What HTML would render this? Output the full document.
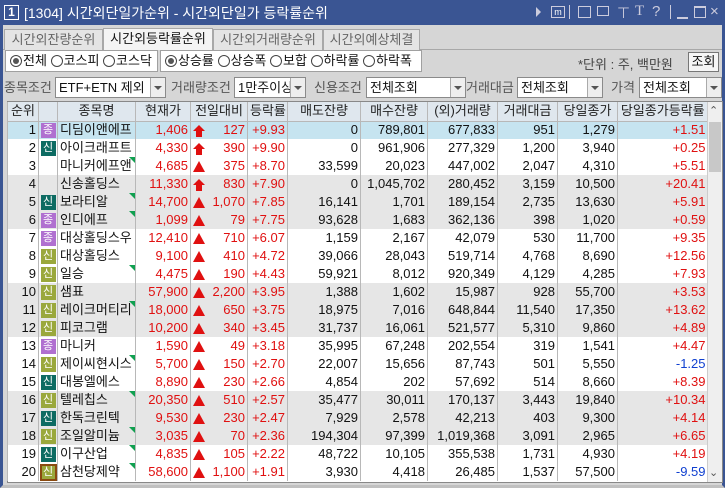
<!DOCTYPE html>
<html><head><meta charset="utf-8"><style>
*{margin:0;padding:0;box-sizing:border-box}
body{width:725px;height:488px;overflow:hidden;background:#d6d6d6;font-family:"Liberation Sans","Noto Sans CJK KR",sans-serif;font-size:13px;color:#111;position:relative}
.a{position:absolute}
.title{left:0;top:0;width:725px;height:25px;background:#3a5593;color:#fff;font-size:14px}
.tab{top:29px;height:21px;border:1px solid #a8a8a8;border-bottom:none;background:#e4e4e4;color:#666;font-size:13px;line-height:20px;text-align:center}
.grp{top:50px;height:22px;background:#fff;border:1px solid #a0a0a0;line-height:20px;font-size:13px;padding-left:4px;white-space:nowrap}
.rd{display:inline-block;width:12px;height:12px;border:1px solid #444;border-radius:50%;vertical-align:-2px;margin-right:1px;position:relative}
.rd.on::after{content:"";position:absolute;left:2px;top:2px;width:6px;height:6px;border-radius:50%;background:#555}
.lbl{top:79px;font-size:13px;color:#555;line-height:17px}
.cb{top:77px;height:21px;background:#fff;border:1px solid #8a8a8a;line-height:19px;padding-left:3px;font-size:13px}
.cb b{position:absolute;right:0;top:0;width:15px;height:19px;border-left:1px solid #aaa;background:#eee}
.cb b::after{content:"";position:absolute;left:3px;top:8px;border-left:4px solid transparent;border-right:4px solid transparent;border-top:4px solid #555}
table{position:absolute;left:7px;top:102px;border-collapse:collapse;table-layout:fixed;width:700px;background:#fff}
tr{height:18px}
td,th{height:18px;line-height:16px;padding:0 2px;white-space:nowrap;overflow:hidden;text-align:right;border-left:1px solid #b8b8b8;font-weight:normal;font-size:13px}
th{height:19px;background:#dfe7ee;text-align:center;border-bottom:1px solid #b8b8b8;color:#222}
tr.g td{background:#e6e6e6}
tr.s td{background:#c6e4f0}
td.n{text-align:left;position:relative}
td.n.m::after{content:"";position:absolute;right:0;top:0;border-left:6px solid transparent;border-top:6px solid #10a050}
.r{color:#e01010}.bl{color:#1040d0}
.bd{display:inline-block;width:15px;height:15px;line-height:15px;text-align:center;font-size:11px;vertical-align:top;margin-top:1px}
.p{background:#b070d0;color:#fff}.t{background:#0d6b62;color:#fff}.o{background:#9aa83c;color:#fff}
td.c{text-align:center;padding:0}
.tri{display:inline-block;border-left:6px solid transparent;border-right:6px solid transparent;border-bottom:11px solid #e01010}
.up{display:inline-block;width:12px;height:12px;position:relative}
.up::before{content:"";position:absolute;left:0;top:0;border-left:6px solid transparent;border-right:6px solid transparent;border-bottom:6px solid #e01010}
.up::after{content:"";position:absolute;left:3px;top:6px;width:6px;height:6px;background:#e01010}
</style></head><body>
<div class="a title">
<div class="a" style="left:4px;top:5px;width:15px;height:15px;border:1.5px solid #fff;font-size:12px;line-height:12px;text-align:center;font-weight:bold">1</div>
<div class="a" style="left:24px;top:3px">[1304] 시간외단일가순위 - 시간외단일가 등락률순위</div>
<div class="a" style="left:536px;top:7px;border-top:5px solid transparent;border-bottom:5px solid transparent;border-left:5px solid #ccd"></div>
<div class="a" style="left:551px;top:6px;width:14px;height:12px;border:1px solid #ccd;font-size:9px;line-height:10px;text-align:center">m</div>
<div class="a" style="left:569px;top:5px;width:1px;height:14px;background:#ccd"></div>
<div class="a" style="left:578px;top:6px;width:13px;height:12px;border:1px solid #ccd"></div>
<div class="a" style="left:597px;top:6px;width:12px;height:10px;border:1px solid #ccd"></div>
<div class="a" style="left:617px;top:4px;font-size:15px;color:#ccd">⊤</div>
<div class="a" style="left:635px;top:3px;font-size:15px;color:#ccd;font-family:'Liberation Serif'">T</div>
<div class="a" style="left:652px;top:3px;font-size:15px;color:#ccd">?</div>
<div class="a" style="left:670px;top:5px;width:1px;height:14px;background:#ccd"></div>
<div class="a" style="left:677px;top:17px;width:11px;height:2px;background:#ccd"></div>
<div class="a" style="left:694px;top:6px;width:12px;height:12px;border:1px solid #ccd;border-top-width:2px"></div>
<div class="a" style="left:710px;top:3px;font-size:15px;color:#ccd">×</div>
</div>
<div class="a" style="left:0;top:25px;width:725px;height:463px;border:3px solid #3a5593;border-top:none;border-bottom-color:#c0c0c0"></div>
<div class="a" style="left:3px;top:49px;width:719px;height:1px;background:#a8a8a8"></div>
<div class="a tab" style="left:4px;width:99px">시간외잔량순위</div>
<div class="a tab" style="left:103px;top:28px;height:22px;width:110px;background:#f4f4f4;color:#111">시간외등락률순위</div>
<div class="a tab" style="left:213px;width:110px">시간외거래량순위</div>
<div class="a tab" style="left:323px;width:97px">시간외예상체결</div>
<div class="a grp" style="left:5px;width:153px"><span class="rd on"></span>전체 <span class="rd"></span>코스피 <span class="rd"></span>코스닥</div>
<div class="a grp" style="left:160px;width:262px"><span class="rd on"></span>상승률 <span class="rd"></span>상승폭 <span class="rd"></span>보합 <span class="rd"></span>하락률 <span class="rd"></span>하락폭</div>
<div class="a" style="left:578px;top:54px;font-size:13px;color:#444">*단위 : 주, 백만원</div>
<div class="a" style="left:688px;top:52px;width:31px;height:20px;background:#f6f6f6;border:1px solid #777;font-size:13px;line-height:18px;text-align:center">조회</div>
<div class="a lbl" style="left:4px">종목조건</div>
<div class="a cb" style="left:55px;width:111px">ETF+ETN 제외<b></b></div>
<div class="a lbl" style="left:171px">거래량조건</div>
<div class="a cb" style="left:234px;width:72px">1만주이상<b></b></div>
<div class="a lbl" style="left:314px">신용조건</div>
<div class="a cb" style="left:366px;width:100px">전체조회<b></b></div>
<div class="a lbl" style="left:466px">거래대금</div>
<div class="a cb" style="left:517px;width:86px">전체조회<b></b></div>
<div class="a lbl" style="left:611px">가격</div>
<div class="a cb" style="left:639px;width:83px">전체조회<b></b></div>
<div class="a" style="left:7px;top:101px;width:716px;height:382px;border:1px solid #888;background:#fff"></div>
<table>
<colgroup><col style="width:31px"><col style="width:19px"><col style="width:78px"><col style="width:55px"><col style="width:57px"><col style="width:40px"><col style="width:73px"><col style="width:67px"><col style="width:70px"><col style="width:60px"><col style="width:60px"><col style="width:90px"></colgroup>
<tr style="height:19px"><th>순위</th><th></th><th>종목명</th><th>현재가</th><th>전일대비</th><th>등락률</th><th>매도잔량</th><th>매수잔량</th><th>(외)거래량</th><th>거래대금</th><th>당일종가</th><th>당일종가등락률</th></tr>
<tr class="s"><td>1</td><td class="c"><span class="bd p">종</span></td><td class="n">디딤이앤에프</td><td class="r">1,406</td><td class="r"><span class="up" style="float:left;margin-top:3px"></span>127</td><td class="r">+9.93</td><td>0</td><td>789,801</td><td>677,833</td><td>951</td><td>1,279</td><td class="r">+1.51</td></tr>
<tr><td>2</td><td class="c"><span class="bd t">신</span></td><td class="n">아이크래프트</td><td class="r">4,330</td><td class="r"><span class="up" style="float:left;margin-top:3px"></span>390</td><td class="r">+9.90</td><td>0</td><td>961,906</td><td>277,329</td><td>1,200</td><td>3,940</td><td class="r">+0.25</td></tr>
<tr><td>3</td><td class="c"></td><td class="n m">마니커에프앤</td><td class="r">4,685</td><td class="r"><span class="tri" style="float:left;margin-top:3px"></span>375</td><td class="r">+8.70</td><td>33,599</td><td>20,023</td><td>447,002</td><td>2,047</td><td>4,310</td><td class="r">+5.51</td></tr>
<tr class="g"><td>4</td><td class="c"></td><td class="n">신송홀딩스</td><td class="r">11,330</td><td class="r"><span class="up" style="float:left;margin-top:3px"></span>830</td><td class="r">+7.90</td><td>0</td><td>1,045,702</td><td>280,452</td><td>3,159</td><td>10,500</td><td class="r">+20.41</td></tr>
<tr class="g"><td>5</td><td class="c"><span class="bd t">신</span></td><td class="n m">보라티알</td><td class="r">14,700</td><td class="r"><span class="tri" style="float:left;margin-top:3px"></span>1,070</td><td class="r">+7.85</td><td>16,141</td><td>1,701</td><td>189,154</td><td>2,735</td><td>13,630</td><td class="r">+5.91</td></tr>
<tr class="g"><td>6</td><td class="c"><span class="bd p">종</span></td><td class="n m">인디에프</td><td class="r">1,099</td><td class="r"><span class="tri" style="float:left;margin-top:3px"></span>79</td><td class="r">+7.75</td><td>93,628</td><td>1,683</td><td>362,136</td><td>398</td><td>1,020</td><td class="r">+0.59</td></tr>
<tr><td>7</td><td class="c"><span class="bd p">종</span></td><td class="n">대상홀딩스우</td><td class="r">12,410</td><td class="r"><span class="tri" style="float:left;margin-top:3px"></span>710</td><td class="r">+6.07</td><td>1,159</td><td>2,167</td><td>42,079</td><td>530</td><td>11,700</td><td class="r">+9.35</td></tr>
<tr><td>8</td><td class="c"><span class="bd o">신</span></td><td class="n">대상홀딩스</td><td class="r">9,100</td><td class="r"><span class="tri" style="float:left;margin-top:3px"></span>410</td><td class="r">+4.72</td><td>39,066</td><td>28,043</td><td>519,714</td><td>4,768</td><td>8,690</td><td class="r">+12.56</td></tr>
<tr><td>9</td><td class="c"><span class="bd o">신</span></td><td class="n m">일승</td><td class="r">4,475</td><td class="r"><span class="tri" style="float:left;margin-top:3px"></span>190</td><td class="r">+4.43</td><td>59,921</td><td>8,012</td><td>920,349</td><td>4,129</td><td>4,285</td><td class="r">+7.93</td></tr>
<tr class="g"><td>10</td><td class="c"><span class="bd o">신</span></td><td class="n">샘표</td><td class="r">57,900</td><td class="r"><span class="tri" style="float:left;margin-top:3px"></span>2,200</td><td class="r">+3.95</td><td>1,388</td><td>1,602</td><td>15,987</td><td>928</td><td>55,700</td><td class="r">+3.53</td></tr>
<tr class="g"><td>11</td><td class="c"><span class="bd o">신</span></td><td class="n m">레이크머티리</td><td class="r">18,000</td><td class="r"><span class="tri" style="float:left;margin-top:3px"></span>650</td><td class="r">+3.75</td><td>18,975</td><td>7,016</td><td>648,844</td><td>11,540</td><td>17,350</td><td class="r">+13.62</td></tr>
<tr class="g"><td>12</td><td class="c"><span class="bd o">신</span></td><td class="n">피코그램</td><td class="r">10,200</td><td class="r"><span class="tri" style="float:left;margin-top:3px"></span>340</td><td class="r">+3.45</td><td>31,737</td><td>16,061</td><td>521,577</td><td>5,310</td><td>9,860</td><td class="r">+4.89</td></tr>
<tr><td>13</td><td class="c"><span class="bd p">종</span></td><td class="n">마니커</td><td class="r">1,590</td><td class="r"><span class="tri" style="float:left;margin-top:3px"></span>49</td><td class="r">+3.18</td><td>35,995</td><td>67,248</td><td>202,554</td><td>319</td><td>1,541</td><td class="r">+4.47</td></tr>
<tr><td>14</td><td class="c"><span class="bd o">신</span></td><td class="n m">제이씨현시스</td><td class="r">5,700</td><td class="r"><span class="tri" style="float:left;margin-top:3px"></span>150</td><td class="r">+2.70</td><td>22,007</td><td>15,656</td><td>87,743</td><td>501</td><td>5,550</td><td class="bl">-1.25</td></tr>
<tr><td>15</td><td class="c"><span class="bd t">신</span></td><td class="n">대봉엘에스</td><td class="r">8,890</td><td class="r"><span class="tri" style="float:left;margin-top:3px"></span>230</td><td class="r">+2.66</td><td>4,854</td><td>202</td><td>57,692</td><td>514</td><td>8,660</td><td class="r">+8.39</td></tr>
<tr class="g"><td>16</td><td class="c"><span class="bd o">신</span></td><td class="n m">텔레칩스</td><td class="r">20,350</td><td class="r"><span class="tri" style="float:left;margin-top:3px"></span>510</td><td class="r">+2.57</td><td>35,477</td><td>30,011</td><td>170,137</td><td>3,443</td><td>19,840</td><td class="r">+10.34</td></tr>
<tr class="g"><td>17</td><td class="c"><span class="bd t">신</span></td><td class="n">한독크린텍</td><td class="r">9,530</td><td class="r"><span class="tri" style="float:left;margin-top:3px"></span>230</td><td class="r">+2.47</td><td>7,929</td><td>2,578</td><td>42,213</td><td>403</td><td>9,300</td><td class="r">+4.14</td></tr>
<tr class="g"><td>18</td><td class="c"><span class="bd o">신</span></td><td class="n m">조일알미늄</td><td class="r">3,035</td><td class="r"><span class="tri" style="float:left;margin-top:3px"></span>70</td><td class="r">+2.36</td><td>194,304</td><td>97,399</td><td>1,019,368</td><td>3,091</td><td>2,965</td><td class="r">+6.65</td></tr>
<tr><td>19</td><td class="c"><span class="bd t">신</span></td><td class="n m">이구산업</td><td class="r">4,835</td><td class="r"><span class="tri" style="float:left;margin-top:3px"></span>105</td><td class="r">+2.22</td><td>48,722</td><td>10,105</td><td>355,538</td><td>1,731</td><td>4,930</td><td class="r">+4.19</td></tr>
<tr><td>20</td><td class="c"><span class="bd o" style="outline:2px solid #8a4a10;outline-offset:-1px">신</span></td><td class="n m">삼천당제약</td><td class="r">58,600</td><td class="r"><span class="tri" style="float:left;margin-top:3px"></span>1,100</td><td class="r">+1.91</td><td>3,930</td><td>4,418</td><td>26,485</td><td>1,537</td><td>57,500</td><td class="bl">-9.59</td></tr>
</table>
<div class="a" style="left:707px;top:102px;width:15px;height:380px;background:#efefef;border-left:1px solid #ccc"></div>
<div class="a" style="left:709px;top:104px;font-size:11px;color:#555">⌃</div>
<div class="a" style="left:709px;top:122px;width:12px;height:50px;background:#c8c8c8"></div>
<div class="a" style="left:709px;top:466px;font-size:11px;color:#555">⌄</div>
</body></html>
